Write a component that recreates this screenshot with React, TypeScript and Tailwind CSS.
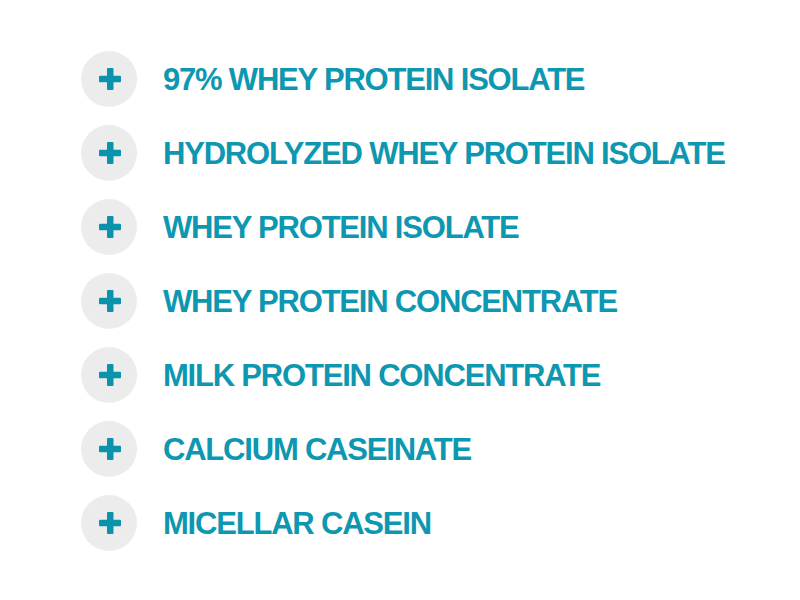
const items = [
  "97% WHEY PROTEIN ISOLATE",
  "HYDROLYZED WHEY PROTEIN ISOLATE",
  "WHEY PROTEIN ISOLATE",
  "WHEY PROTEIN CONCENTRATE",
  "MILK PROTEIN CONCENTRATE",
  "CALCIUM CASEINATE",
  "MICELLAR CASEIN",
];

function PlusIcon() {
  return (
    <svg width="24" height="24" viewBox="0 0 24 24" aria-hidden="true">
      <rect x="9" y="1" width="6.5" height="22" rx="1" fill="#0b93ab" />
      <rect x="1" y="8.8" width="22" height="6.5" rx="1" fill="#0b93ab" />
    </svg>
  );
}

export default function App() {
  return (
    <div className="min-h-[600px] w-[800px] bg-white pl-[81px] pt-[51px]">
      <ul className="flex flex-col gap-[18px]">
        {items.map((label) => (
          <li key={label} className="flex items-center gap-[26px]">
            <button className="flex h-[56px] w-[56px] shrink-0 items-center justify-center rounded-full bg-[#ececec] pl-px">
              <PlusIcon />
            </button>
            <span className="font-['Liberation_Sans',Arial,sans-serif] text-[31px] font-bold leading-none tracking-[-1.2px] text-[#0e97b0]">
              {label}
            </span>
          </li>
        ))}
      </ul>
    </div>
  );
}
